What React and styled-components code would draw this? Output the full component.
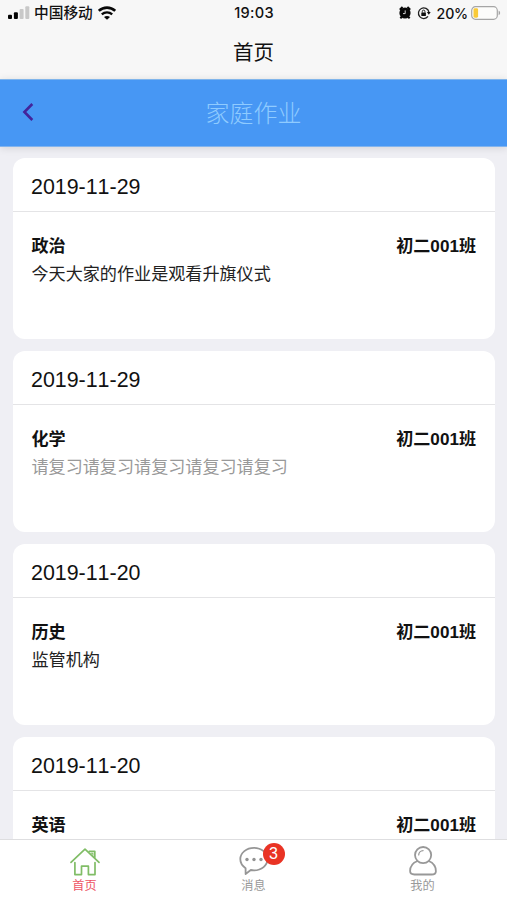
import React from 'react'
import styled, { createGlobalStyle } from 'styled-components'

const homework = [
  { date: '2019-11-29', subject: '政治', grade: '初二001班', content: '今天大家的作业是观看升旗仪式' },
  { date: '2019-11-29', subject: '化学', grade: '初二001班', content: '请复习请复习请复习请复习请复习', read: true },
  { date: '2019-11-20', subject: '历史', grade: '初二001班', content: '监管机构' },
  { date: '2019-11-20', subject: '英语', grade: '初二001班', content: '' },
]

function SignalIcon() {
  return (
    <svg width="22" height="14" viewBox="0 0 22 14">
      <rect x="0" y="8.7" width="4" height="4.3" rx="1" fill="#050505" />
      <rect x="5.9" y="6.2" width="4" height="6.8" rx="1" fill="#050505" />
      <rect x="11.6" y="3" width="4" height="10" rx="1" fill="#c8c8c8" />
      <rect x="17.3" y="0.3" width="4" height="12.7" rx="1" fill="#c8c8c8" />
    </svg>
  )
}

function WifiIcon() {
  return (
    <svg width="18" height="14" viewBox="0 0 18 14" fill="none" stroke="#080808">
      <path d="M.8 4.9C5.4.5 12.6.5 17.2 4.9" strokeWidth="2.6" />
      <path d="M3.8 8.3c3-2.7 7.4-2.7 10.4 0" strokeWidth="2.3" />
      <path d="M9 13.8 6 11c1.7-1.5 4.3-1.5 6 0z" fill="#080808" stroke="none" />
    </svg>
  )
}

function AlarmIcon() {
  return (
    <svg width="12" height="14" viewBox="0 0 12 14">
      <circle cx="6" cy="7" r="5.6" fill="#080808" />
      <path d="M.8 3.7 3.6 1M11.2 3.7 8.4 1M2.6 10.8 1.4 12.4M9.4 10.8l1.2 1.6" stroke="#080808" strokeWidth="2" />
      <path d="M6.2 4.4v3.2H4" fill="none" stroke="#e8e8e8" strokeWidth=".9" />
    </svg>
  )
}

function RotationLockIcon() {
  return (
    <svg width="14" height="14" viewBox="0 0 14 14" fill="none" stroke="#222">
      <path d="M11 10.4A5.3 5.3 0 1 1 11.9 6" strokeWidth="1.3" />
      <path d="M9.9 6h3.8l-1.9 2.7z" fill="#111" stroke="none" />
      <rect x="4.3" y="6.4" width="4.6" height="3.5" rx=".5" fill="#111" stroke="none" />
      <path d="M5.3 6.6V5.4a1.3 1.3 0 0 1 2.6 0v1.2" strokeWidth="1" />
    </svg>
  )
}

function BatteryIcon() {
  return (
    <svg width="30" height="14" viewBox="0 0 30 14">
      <rect x=".7" y=".7" width="25.6" height="12.6" rx="3.8" fill="#fcfcfb" stroke="#a5a5a5" strokeWidth="1.2" />
      <rect x="2.5" y="2.3" width="4.6" height="9.4" rx="1.4" fill="#f9ca38" />
      <path d="M27.6 4.8c2 .6 2 3.8 0 4.4z" fill="#a5a5a5" />
    </svg>
  )
}

function HomeIcon() {
  return (
    <svg width="30" height="30" viewBox="0 -2 30 30" fill="none" stroke="#80bd66" strokeWidth="1.7" strokeLinejoin="round" strokeLinecap="round">
      <path d="M1 14.3 15 1.2l14 13.1" />
      <path d="M4.9 14.6v12h6.6v-8.4h6.9v8.4h6.6v-12" />
      <path d="M19.2 3.3h5.6v6" />
      <path d="M21.2 5.3h1.7v2" strokeWidth="1.1" />
    </svg>
  )
}

function ChatIcon() {
  return (
    <svg width="30" height="30" viewBox="0 0 30 30">
      <path
        d="M15 1.8C7.5 1.8 1.3 6.8 1.3 13.1c0 3.8 2.1 7 5.3 9.1V28l5.2-4c1 .2 2.1.4 3.2.4 7.6 0 13.5-5 13.5-11.3S22.6 1.8 15 1.8z"
        fill="none" stroke="#969696" strokeWidth="1.8" strokeLinejoin="round"
      />
      <g fill="#929292">
        <circle cx="8" cy="13.5" r="1.7" />
        <circle cx="15" cy="13.5" r="1.7" />
        <circle cx="22" cy="13.5" r="1.7" />
      </g>
    </svg>
  )
}

function UserIcon() {
  return (
    <svg width="28" height="30" viewBox="0 0 28 30" fill="none" stroke="#989898" strokeWidth="1.8">
      <circle cx="14.1" cy="9.1" r="8.1" />
      <path d="M9.7 9a4.5 4.5 0 0 1 4.4-4.4" strokeWidth="1.2" strokeLinecap="round" />
      <path d="M8.5 15C4 16.7 1.1 20.8 1.1 25.1c0 2.8 1.8 3.4 4.3 3.4h17.2c2.7 0 4.3-.8 4.3-3.3 0-4.4-3-8.5-7.2-10.2" />
    </svg>
  )
}

function App() {
  return (
    <Page>
      <GlobalStyle />
      <StatusBar>
        <StatusGroup>
          <SignalIcon />
          <Carrier>中国移动</Carrier>
          <WifiIcon />
        </StatusGroup>
        <Time>19:03</Time>
        <StatusGroup $end>
          <AlarmIcon />
          <RotationLockIcon />
          <Percent>20%</Percent>
          <BatteryIcon />
        </StatusGroup>
      </StatusBar>
      <NavTitle>首页</NavTitle>
      <Header>
        <BackButton aria-label="返回">
          <svg width="12" height="20" viewBox="0 0 12 20" fill="none" stroke="#43249b" strokeWidth="2.6">
            <path d="M10.3 2 2.4 10l7.9 8" />
          </svg>
        </BackButton>
        <HeaderTitle>家庭作业</HeaderTitle>
      </Header>
      <List>
        {homework.map((item, i) => (
          <Card key={i}>
            <CardDate>{item.date}</CardDate>
            <CardBody>
              <CardRow>
                <span>{item.subject}</span>
                <span>{item.grade}</span>
              </CardRow>
              <Content $read={item.read}>{item.content}</Content>
            </CardBody>
          </Card>
        ))}
      </List>
      <TabBar>
        <Tab $active>
          <TabIcon><HomeIcon /></TabIcon>
          首页
        </Tab>
        <Tab>
          <TabIcon>
            <ChatIcon />
            <Badge>3</Badge>
          </TabIcon>
          消息
        </Tab>
        <Tab>
          <TabIcon><UserIcon /></TabIcon>
          我的
        </Tab>
      </TabBar>
    </Page>
  )
}

export default App

const GlobalStyle = createGlobalStyle`
  * {
    box-sizing: border-box;
  }
  body {
    margin: 0;
    font-family: "Liberation Sans", "Noto Sans CJK SC", sans-serif;
  }
  svg {
    display: block;
    flex-shrink: 0;
  }
`

const Page = styled.div`
  width: 507px;
  height: 900px;
  display: flex;
  flex-direction: column;
  overflow: hidden;
  background: #efeff4;
  color: #111;
`

const StatusBar = styled.div`
  height: 26px;
  flex-shrink: 0;
  padding: 0 6px 0 8px;
  display: grid;
  grid-template-columns: 1fr auto 1fr;
  align-items: center;
  background: #f7f7f7;
  color: #111;
`

const StatusGroup = styled.div`
  display: flex;
  align-items: center;
  gap: ${(p) => (p.$end ? '6px' : '5px')};
  justify-content: ${(p) => (p.$end ? 'flex-end' : 'flex-start')};
`

const Carrier = styled.span`
  margin-left: -1px;
  font-size: 14.7px;
  line-height: 20px;
  font-weight: 500;
`

const Time = styled.span`
  padding-right: 1px;
  font-family: Inter, sans-serif;
  font-size: 14.6px;
  font-weight: 500;
  letter-spacing: 0.3px;
`

const Percent = styled.span`
  font-family: Inter, sans-serif;
  font-size: 14.2px;
  font-weight: 500;
  letter-spacing: -0.2px;
  margin: 0 -3px 0 0;
`

const NavTitle = styled.div`
  height: 53px;
  flex-shrink: 0;
  display: flex;
  align-items: center;
  justify-content: center;
  background: #f7f7f7;
  font-size: 20.5px;
  line-height: 28px;
`

const Header = styled.div`
  height: 68px;
  flex-shrink: 0;
  padding: 0 22px 3px;
  display: grid;
  grid-template-columns: 1fr auto 1fr;
  align-items: center;
  background: #4797f4;
  border-top: 1px solid #80b5eb;
  border-bottom: 1px solid #82b4ee;
  box-shadow: 0 1px 8px rgba(0, 0, 0, 0.12);
`

const BackButton = styled.button`
  width: 12px;
  padding: 0;
  border: 0;
  background: none;
`

const HeaderTitle = styled.div`
  font-family: "Noto Sans CJK SC", sans-serif;
  font-size: 24px;
  line-height: 34px;
  font-weight: 200;
  color: #8fcbff;
`

const List = styled.div`
  flex: 1;
  min-height: 0;
  overflow: hidden;
  padding: 11px 12px 0 13px;
  display: flex;
  flex-direction: column;
  gap: 12px;
`

const Card = styled.div`
  height: 181px;
  flex-shrink: 0;
  border-radius: 12px;
  background: #fff;
`

const CardDate = styled.div`
  height: 54px;
  padding: 5px 18px 0;
  display: flex;
  align-items: center;
  border-bottom: 1px solid #e4e4e6;
  font-size: 21.4px;
  font-kerning: none;
`

const CardBody = styled.div`
  padding: 21px 19px 0 18.5px;
`

const CardRow = styled.div`
  display: flex;
  justify-content: space-between;
  font-size: 17.1px;
  line-height: 28px;
  font-weight: 700;
`

const Content = styled.div`
  font-size: 17.1px;
  line-height: 28px;
  color: ${(p) => (p.$read ? '#999' : '#222')};
`

const TabBar = styled.div`
  height: 61px;
  flex-shrink: 0;
  display: grid;
  grid-template-columns: repeat(3, 1fr);
  border-top: 1px solid #dedee0;
  background: #fff;
`

const Tab = styled.div`
  padding-top: 6px;
  display: flex;
  flex-direction: column;
  align-items: center;
  font-size: 12.2px;
  line-height: 18px;
  color: ${(p) => (p.$active ? '#ee5364' : '#999')};
`

const TabIcon = styled.div`
  height: 31px;
  position: relative;
`

const Badge = styled.span`
  position: absolute;
  left: 24px;
  top: -3px;
  width: 22px;
  height: 22px;
  border-radius: 50%;
  background: #e93324;
  color: #fff;
  font-size: 16px;
  line-height: 22px;
  text-align: center;
`
